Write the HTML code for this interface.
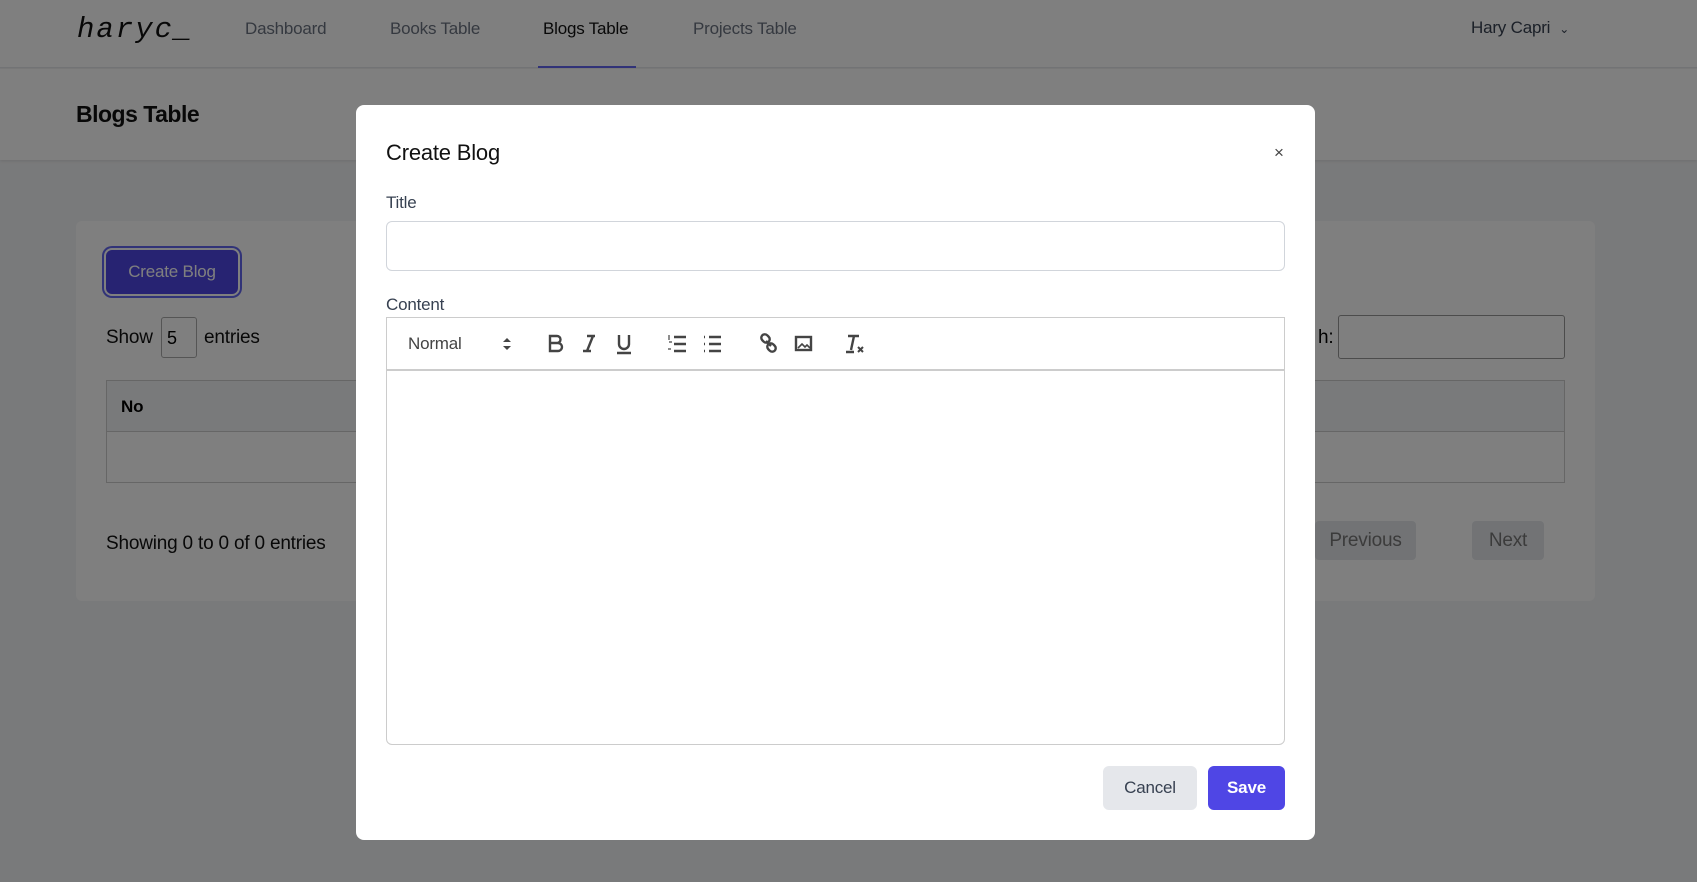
<!DOCTYPE html>
<html><head><style>
*{box-sizing:border-box;margin:0;padding:0}
body{width:1697px;height:882px;overflow:hidden;font-family:"Liberation Sans",sans-serif;background:#fff;position:relative;letter-spacing:-0.2px}
.a{position:absolute}
.page{position:absolute;inset:0;background:#f3f4f6}
.ov{position:absolute;inset:0;background:rgba(0,0,0,0.5)}
.nav a{position:absolute;top:19px;font-size:17px;color:#6b7280}
</style></head><body>
<div class="page">
  <div class="a" style="left:0;top:0;width:1697px;height:68px;background:#fff;border-bottom:1px solid #e5e7eb"></div>
  <div class="a" style="left:77px;top:13px;font:italic 29px 'Liberation Mono',monospace;letter-spacing:2px;color:#111">haryc_</div>
  <div class="nav">
    <a class="a" style="left:245px">Dashboard</a>
    <a class="a" style="left:390px">Books Table</a>
    <a class="a" style="left:543px;color:#111">Blogs Table</a>
    <a class="a" style="left:693px">Projects Table</a>
  </div>
  <div class="a" style="left:538px;top:66px;width:98px;height:2px;background:#6366f1"></div>
  <div class="a" style="left:1471px;top:18px;font-size:17px;color:#374151">Hary Capri&nbsp; <span style="font-size:12px">⌄</span></div>
  <div class="a" style="left:0;top:69px;width:1697px;height:91px;background:#fff;box-shadow:0 1px 3px rgba(0,0,0,.1)"></div>
  <div class="a" style="left:76px;top:101px;font-size:23px;font-weight:bold;color:#111;letter-spacing:-0.5px">Blogs Table</div>
  <div class="a" style="left:76px;top:221px;width:1519px;height:380px;background:#fff;border-radius:6px"></div>
  <div class="a" style="left:106px;top:250px;width:132px;height:44px;background:#4f46e5;border-radius:6px;color:#fff;font-size:17px;line-height:44px;text-align:center;box-shadow:0 0 0 2px #fff,0 0 0 4px #6366f1">Create Blog</div>
  <div class="a" style="left:106px;top:327px;font-size:19px;color:#111">Show</div>
  <div class="a" style="left:161px;top:317px;width:36px;height:41px;border:1px solid #aaa;border-radius:3px;font-size:18px;padding:10px 5px">5</div>
  <div class="a" style="left:204px;top:327px;font-size:19px;color:#111">entries</div>
  <div class="a" style="left:1318px;top:327px;font-size:19px">h:</div>
  <div class="a" style="left:1338px;top:315px;width:227px;height:44px;border:1px solid #999;border-radius:3px"></div>
  <div class="a" style="left:106px;top:380px;width:1459px;height:52px;background:#f3f4f6;border:1px solid #ccc"></div>
  <div class="a" style="left:121px;top:397px;font-size:17px;font-weight:bold">No</div>
  <div class="a" style="left:106px;top:432px;width:1459px;height:51px;border:1px solid #ccc;border-top:0"></div>
  <div class="a" style="left:106px;top:533px;font-size:19px;color:#111">Showing 0 to 0 of 0 entries</div>
  <div class="a" style="left:1315px;top:521px;width:101px;height:39px;background:#e5e7eb;border-radius:4px;font-size:19px;color:#777;line-height:39px;text-align:center">Previous</div>
  <div class="a" style="left:1472px;top:521px;width:72px;height:39px;background:#e5e7eb;border-radius:4px;font-size:19px;color:#777;line-height:39px;text-align:center">Next</div>
</div>
<div class="ov"></div>
<div class="a" style="left:356px;top:105px;width:959px;height:735px;background:#fff;border-radius:8px">
  <div class="a" style="left:30px;top:35px;font-size:22px;color:#111">Create Blog</div>
  <div class="a" style="left:918px;top:38px;font-size:17px;color:#444">×</div>
  <div class="a" style="left:30px;top:88px;font-size:17px;color:#374151">Title</div>
  <div class="a" style="left:30px;top:116px;width:899px;height:50px;border:1px solid #d1d5db;border-radius:6px"></div>
  <div class="a" style="left:30px;top:190px;font-size:17px;color:#374151">Content</div>
  <div class="a" style="left:30px;top:212px;width:899px;height:53px;border:1px solid #ccc"></div>
  <div class="a" style="left:52px;top:229px;font-size:17px;color:#444">Normal</div>
  <svg class="a" style="left:145px;top:231px" width="12" height="16" viewBox="0 0 12 16"><path d="M2 6l4-4 4 4zM2 10l4 4 4-4z" fill="#444"/></svg>
  <svg class="a" style="left:190px;top:226px" width="190" height="26" viewBox="0 0 190 26" fill="none" stroke="#444" stroke-width="2.4">
    <path d="M4 5h7a3.5 3.5 0 010 7H4zM4 12h8a4 4 0 010 8H4z"/>
    <path d="M41 5h8M37 20h8M47 5l-6 15"/>
    <path d="M73 4v9a5 5 0 0010 0V4M71 22h14"/>
    <path d="M128 6h12M128 13h12M128 20h12" /><path d="M123 4v5M123 11h3M122 18h3" stroke-width="1.2"/>
    <path d="M163 6h12M163 13h12M163 20h12M158 6h1M158 13h1M158 20h1" stroke-width="2.4"/>
  </svg>
  <svg class="a" style="left:402px;top:226px" width="120" height="26" viewBox="0 0 120 26" fill="none" stroke="#444" stroke-width="2.4">
    <rect x="3" y="4" width="9" height="7" rx="3.5" transform="rotate(45 7.5 7.5)"/>
    <rect x="9" y="13" width="9" height="7" rx="3.5" transform="rotate(45 13.5 16.5)"/>
    <path d="M8 10l5 5"/>
    <rect x="38" y="6" width="15" height="13"/><path d="M40 17l4-4 3 3 2-2 3 3" stroke-width="1.6"/>
    <path d="M90 5h11M96 5l-3 14M88 21h8"/><path d="M100 16l5 5M105 16l-5 5" stroke-width="2"/>
  </svg>
  <div class="a" style="left:30px;top:265px;width:899px;height:375px;border:1px solid #ccc;border-radius:0 0 6px 6px"></div>
  <div class="a" style="left:747px;top:661px;width:94px;height:44px;background:#e5e7eb;border-radius:6px;font-size:17px;color:#374151;line-height:44px;text-align:center">Cancel</div>
  <div class="a" style="left:852px;top:661px;width:77px;height:44px;background:#4f46e5;border-radius:6px;font-size:17px;font-weight:bold;color:#fff;line-height:44px;text-align:center">Save</div>
</div>
</body></html>
